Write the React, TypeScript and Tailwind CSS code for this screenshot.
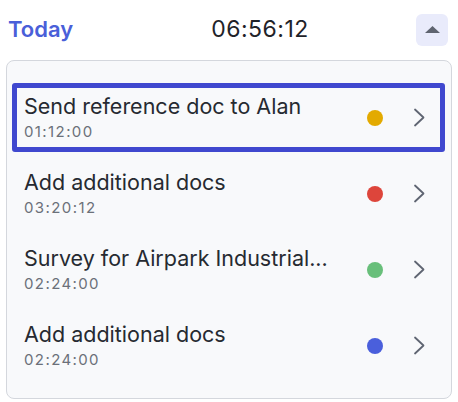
const tasks = [
  { title: 'Send reference doc to Alan', time: '01:12:00', dot: 'bg-[#e3aa00]', active: true },
  { title: 'Add additional docs', time: '03:20:12', dot: 'bg-[#dd453b]', active: false },
  { title: 'Survey for Airpark Industrial...', time: '02:24:00', dot: 'bg-[#68bf7a]', active: false },
  { title: 'Add additional docs', time: '02:24:00', dot: 'bg-[#4a5fdc]', active: false },
]

function Chevron() {
  return (
    <svg width="12" height="19" viewBox="0 0 12 19" fill="none" className="shrink-0">
      <path d="M2 1.5l8.5 8-8.5 8" stroke="#5f6572" strokeWidth="1.8" strokeLinecap="round" strokeLinejoin="round" />
    </svg>
  )
}

export default function App() {
  return (
    <div className="w-[458px] h-[402px] bg-white font-['Inter',sans-serif] px-[6px]">
      <div className="flex items-center h-[58px] pt-[1px]">
        <span className="pl-[2px] text-[22px] font-semibold text-[#4a5fd9] w-[140px]">Today</span>
        <span className="flex-1 text-center text-[23px] tracking-[0.5px] text-[#1f2329] pr-[42px]">06:56:12</span>
        <button className="w-8 h-8 rounded-md bg-[#e9ebfb] flex items-center justify-center mr-[4px]">
          <svg width="15" height="7" viewBox="0 0 15 7">
            <path d="M7.5 0L15 7H0z" fill="#5f6470" />
          </svg>
        </button>
      </div>
      <div className="mt-[2px] h-[339px] rounded-lg border border-[#d4d7dd] bg-[#f8f9fb] pt-[22px] pl-[5px] pr-[6px] flex flex-col gap-[7px]">
        {tasks.map((t, i) => (
          <div
            key={i}
            className={`h-[69px] flex items-center rounded-[3px] ${t.active ? 'border-[5px] border-[#4048cf]' : 'border-[5px] border-transparent'}`}
          >
            <div className="flex-1 min-w-0 pl-[7px]">
              <div className="text-[21.5px] leading-[26px] text-[#262a31] truncate">{t.title}</div>
              <div className="mt-[3px] text-[15px] leading-[20px] tracking-[1.4px] text-[#6b7079]">{t.time}</div>
            </div>
            <span className={`w-4 h-4 rounded-full shrink-0 ml-[30px] ${t.dot}`} />
            <span className="ml-[30px] mr-[15px]">
              <Chevron />
            </span>
          </div>
        ))}
      </div>
    </div>
  )
}
